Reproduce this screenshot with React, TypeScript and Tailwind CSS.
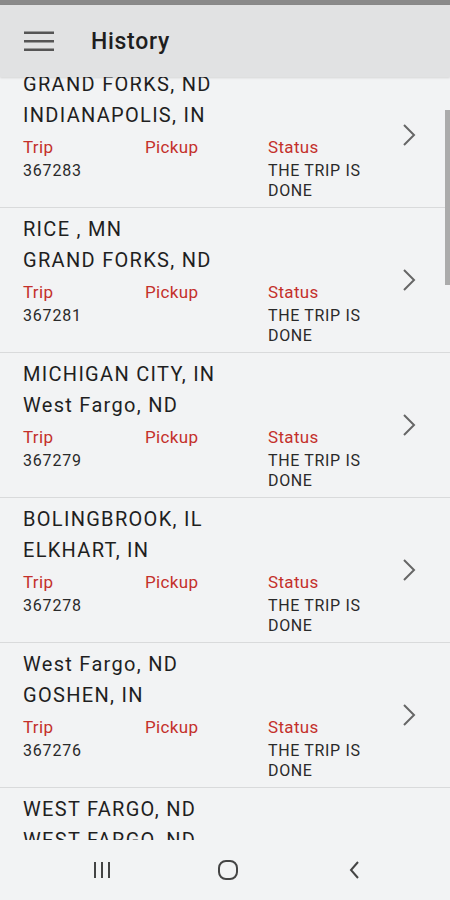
const trips = [
  { from: 'GRAND FORKS, ND', to: 'INDIANAPOLIS, IN', trip: '367283' },
  { from: 'RICE , MN', to: 'GRAND FORKS, ND', trip: '367281' },
  { from: 'MICHIGAN CITY, IN', to: 'West Fargo, ND', trip: '367279' },
  { from: 'BOLINGBROOK, IL', to: 'ELKHART, IN', trip: '367278' },
  { from: 'West Fargo, ND', to: 'GOSHEN, IN', trip: '367276' },
  { from: 'WEST FARGO, ND', to: 'WEST FARGO, ND', trip: '367275' },
]

function TripRow({ from, to, trip }: { from: string; to: string; trip: string }) {
  return (
    <div className="flex items-center border-b border-[#d9dadb] pl-[23px] pr-[34px] pt-[6px] pb-[6px]">
      <div className="flex-1">
        <div className="text-[20px] leading-[31px] tracking-[1.3px] text-[#1f1f1f]">{from}</div>
        <div className="text-[20px] leading-[31px] tracking-[1.3px] text-[#1f1f1f]">{to}</div>
        <div className="mt-1 grid grid-cols-[122px_123px_1fr] text-[17px]">
          <div>
            <div className="leading-[24px] tracking-[0.35px] text-[#c4302b]">Trip</div>
            <div className="mt-[2px] text-[16px] leading-[20px] tracking-[0.8px] text-[#2a2a2a]">{trip}</div>
          </div>
          <div>
            <div className="leading-[24px] tracking-[0.35px] text-[#c4302b]">Pickup</div>
          </div>
          <div>
            <div className="leading-[24px] tracking-[0.35px] text-[#c4302b]">Status</div>
            <div className="mt-[2px] text-[16px] leading-[20px] tracking-[0.65px] text-[#2a2a2a]">
              THE TRIP IS
              <br />
              DONE
            </div>
          </div>
        </div>
      </div>
      <svg width="14" height="24" viewBox="0 0 14 24" className="text-[#666]">
        <path d="M2 2 L12 12 L2 22" fill="none" stroke="currentColor" strokeWidth="2" />
      </svg>
    </div>
  )
}

export default function App() {
  return (
    <div
      className="flex h-[900px] w-[450px] flex-col overflow-hidden bg-[#f2f3f4]"
      style={{ fontFamily: 'Roboto, "Liberation Sans", sans-serif' }}
    >
      <div className="h-[5px] bg-[#8a8a8a]" />
      <div className="relative z-10 flex h-[72px] items-center bg-[#e1e2e3] shadow-[0_1px_2px_rgba(0,0,0,0.12)]">
        <svg width="30" height="20" viewBox="0 0 30 20" className="ml-[24px] text-[#555]">
          <rect x="0" y="0.5" width="30" height="2.5" fill="currentColor" />
          <rect x="0" y="9" width="30" height="2.5" fill="currentColor" />
          <rect x="0" y="17.5" width="30" height="2.5" fill="currentColor" />
        </svg>
        <div className="ml-[37px] mt-[3px] text-[23px] font-medium tracking-[0.7px] text-[#1e1e1e]">History</div>
      </div>
      <div className="relative flex-1 overflow-hidden">
        <div className="mt-[-14px]">
          {trips.map((t) => (
            <TripRow key={t.trip} {...t} />
          ))}
        </div>
        <div className="absolute right-0 top-[33px] h-[175px] w-[5px] bg-[#ababab]" />
      </div>
      <div className="grid h-[60px] grid-cols-3 items-center bg-[#f2f3f4] pl-[39px] pr-[33px]">
        <div className="flex justify-center">
          <svg width="20" height="18" viewBox="0 0 20 18" className="text-[#444]">
            <rect x="2" y="1" width="2" height="16" fill="currentColor" />
            <rect x="9" y="1" width="2" height="16" fill="currentColor" />
            <rect x="16" y="1" width="2" height="16" fill="currentColor" />
          </svg>
        </div>
        <div className="flex justify-center">
          <svg width="22" height="22" viewBox="0 0 22 22" className="text-[#444]">
            <rect x="2" y="2" width="18" height="18" rx="7" fill="none" stroke="currentColor" strokeWidth="2" />
          </svg>
        </div>
        <div className="flex justify-center">
          <svg width="14" height="20" viewBox="0 0 14 20" className="text-[#444]">
            <path d="M11 2 L4 10 L11 18" fill="none" stroke="currentColor" strokeWidth="2" />
          </svg>
        </div>
      </div>
    </div>
  )
}
